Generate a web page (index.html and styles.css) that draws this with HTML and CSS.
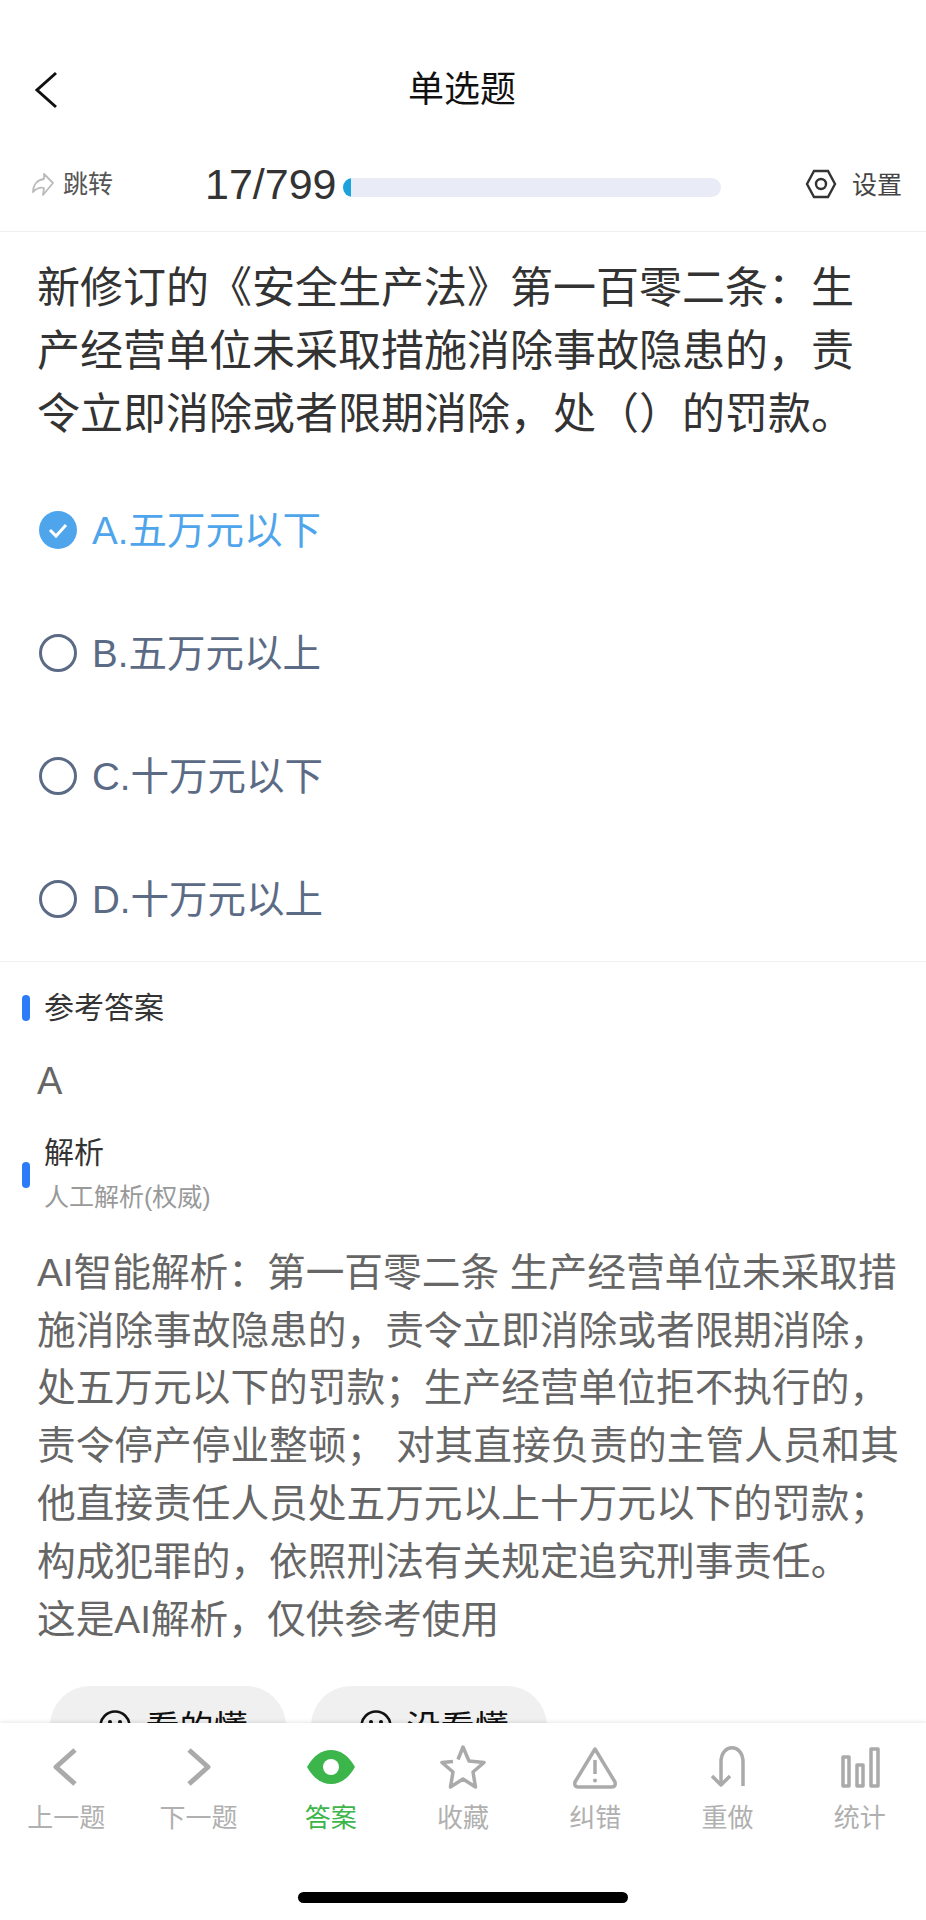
FILE: index.html
```html
<!DOCTYPE html>
<html lang="zh-CN">
<head>
<meta charset="UTF-8">
<meta name="viewport" content="width=device-width, initial-scale=1.0">
<title>单选题</title>
<link rel="stylesheet" href="styles.css">
</head>
<body>
<div class="page">
  <div class="content">
    <div class="nav">
      <svg class="nav-back" width="24" height="38" viewBox="0 0 24 38"><polyline points="22,2 3,19 22,36"/></svg>
      <div class="nav-title">单选题</div>
    </div>

    <div class="toolbar">
      <div class="jump">
        <svg width="24" height="26" viewBox="0 0 24 26"><path d="M13 2 L22 11 L12 23 L13 16 C9 15 5 17 2 20 C2 13 6 8 13 7 Z"/></svg>
        <span>跳转</span>
      </div>
      <div class="count">17/799</div>
      <div class="progress"><div class="progress-fill" style="width: 2.2%"></div></div>
      <div class="settings">
        <svg width="32" height="30" viewBox="0 0 32 30"><polygon points="2,15 9,2 23,2 30,15 23,28 9,28"/><circle cx="16" cy="15" r="5"/></svg>
        <span>设置</span>
      </div>
    </div>

    <div class="question">新修订的《安全生产法》第一百零二条&#xFF1A;生产经营单位未采取措施消除事故隐患的&#xFF0C;责令立即消除或者限期消除&#xFF0C;处&#xFF08;&#xFF09;的罚款。</div>

    <div class="options">
      <div class="option selected">
        <svg width="38" height="38" viewBox="0 0 38 38"><circle class="dot" cx="19" cy="19" r="19"/><polyline class="tick" points="11,19 17,25 27,14"/></svg>
        <span>A.五万元以下</span>
      </div>
      <div class="option">
        <svg width="38" height="38" viewBox="0 0 38 38"><circle cx="19" cy="19" r="17.5"/></svg>
        <span>B.五万元以上</span>
      </div>
      <div class="option">
        <svg width="38" height="38" viewBox="0 0 38 38"><circle cx="19" cy="19" r="17.5"/></svg>
        <span>C.十万元以下</span>
      </div>
      <div class="option">
        <svg width="38" height="38" viewBox="0 0 38 38"><circle cx="19" cy="19" r="17.5"/></svg>
        <span>D.十万元以上</span>
      </div>
    </div>

    <div class="section-head answer-head">
      <div class="section-bar"></div>
      <div class="section-title">参考答案</div>
    </div>
    <div class="answer">A</div>

    <div class="section-head analysis-head">
      <div class="section-bar"></div>
      <div>
        <div class="section-title">解析</div>
        <div class="section-sub">人工解析(权威)</div>
      </div>
    </div>
    <div class="analysis">AI智能解析&#xFF1A;第一百零二条 生产经营单位未采取措施消除事故隐患的&#xFF0C;责令立即消除或者限期消除&#xFF0C;处五万元以下的罚款&#xFF1B;生产经营单位拒不执行的&#xFF0C;责令停产停业整顿&#xFF1B; 对其直接负责的主管人员和其他直接责任人员处五万元以上十万元以下的罚款&#xFF1B;构成犯罪的&#xFF0C;依照刑法有关规定追究刑事责任。<br>这是AI解析&#xFF0C;仅供参考使用</div>

    <div class="feedback">
      <div class="feedback-btn">
        <svg width="32" height="32" viewBox="0 0 32 32"><circle cx="16" cy="16" r="14.5"/><circle class="eye" cx="11" cy="12" r="2"/><circle class="eye" cx="21" cy="12" r="2"/></svg>
        <span>看的懂</span>
      </div>
      <div class="feedback-btn">
        <svg width="32" height="32" viewBox="0 0 32 32"><circle cx="16" cy="16" r="14.5"/><circle class="eye" cx="11" cy="12" r="2"/><circle class="eye" cx="21" cy="12" r="2"/></svg>
        <span>没看懂</span>
      </div>
    </div>
  </div>

  <div class="tabbar">
    <div class="tabs">
      <div class="tab">
        <svg width="48" height="48" viewBox="0 0 48 48"><polyline points="33,7 14,24 33,41"/></svg>
        <span>上一题</span>
      </div>
      <div class="tab">
        <svg width="48" height="48" viewBox="0 0 48 48"><polyline points="15,7 34,24 15,41"/></svg>
        <span>下一题</span>
      </div>
      <div class="tab active">
        <svg width="48" height="48" viewBox="0 0 48 48"><path class="eye-shape" d="M0 24 C7 12 15 7 24 7 C33 7 41 12 48 24 C41 36 33 41 24 41 C15 41 7 36 0 24 Z"/><circle class="eye-pupil" cx="24" cy="24" r="8"/></svg>
        <span>答案</span>
      </div>
      <div class="tab">
        <svg width="48" height="48" viewBox="0 0 48 48"><path d="M19 16.5 L24 4 L30 18 L45 19.5 L34 29 L36.5 44 L24 36 L11.5 44 L14 29 L3 19.5 L14 18.5"/></svg>
        <span>收藏</span>
      </div>
      <div class="tab">
        <svg width="48" height="48" viewBox="0 0 48 48"><path d="M24 6 L44 39 Q45 44 41 44 H7 Q3 44 4 39 Z"/><line x1="24" y1="17" x2="24" y2="31"/><circle class="warn-dot" cx="24" cy="37.5" r="2"/></svg>
        <span>纠错</span>
      </div>
      <div class="tab">
        <svg width="48" height="48" viewBox="0 0 48 48"><path d="M39 43 V19 C39 0 17 0 17 19 V42"/><polyline points="8,33 17,42 26,33"/></svg>
        <span>重做</span>
      </div>
      <div class="tab">
        <svg width="48" height="48" viewBox="0 0 48 48"><rect x="7" y="14" width="6" height="29"/><rect x="21" y="22" width="6" height="21"/><rect x="35" y="6" width="7" height="37"/></svg>
        <span>统计</span>
      </div>
    </div>
    <div class="home-bar"></div>
  </div>
</div>
</body>
</html>
```

FILE: styles.css
```css
/* styles.css */
body {
  margin: 0;
  background-color: #fff;
  color: #333;
  font-family: "Liberation Sans", "Noto Sans CJK SC", sans-serif;
}

.page {
  height: 1920px;
  display: flex;
  flex-direction: column;
  overflow: hidden;
}

.content {
  flex: 1;
  min-height: 0;
  overflow: hidden;
}

/* top bar */
.nav {
  height: 74px;
  padding-top: 50px;
  display: flex;
  align-items: center;
  justify-content: center;
  position: relative;
}

.nav-back {
  position: absolute;
  left: 34px;
  top: 71px;
  fill: none;
  stroke: #111;
  stroke-width: 3;
}

.nav-title {
  font-size: 36px;
  color: #111;
  margin-bottom: 3px;
  margin-left: -2px;
}

.toolbar {
  height: 93px;
  padding-top: 14px;
  display: flex;
  align-items: center;
  border-bottom: 1px solid #f0f0f0;
}

.jump {
  width: 173px;
  padding-left: 31px;
  box-sizing: border-box;
  display: flex;
  align-items: center;
  gap: 8px;
  font-size: 25px;
  color: #555;
}

.jump span {
  margin-bottom: 5px;
}

.jump svg {
  fill: none;
  stroke: #bbb;
  stroke-width: 1.8;
  stroke-linejoin: round;
}

.count {
  font-size: 43px;
  color: #333;
  width: 138px;
  margin-left: 32px;
}

.progress {
  width: 378px;
  height: 19px;
  border-radius: 10px;
  background-color: #e9ecf6;
  overflow: hidden;
  margin-top: 6px;
}

.progress-fill {
  height: 100%;
  background-color: #1ba3dc;
}

.settings {
  margin-left: 84px;
  display: flex;
  align-items: center;
  gap: 15px;
  font-size: 25px;
  color: #444;
}

.settings span {
  margin-bottom: 4px;
}

.settings svg {
  fill: none;
  stroke: #333;
  stroke-width: 2.4;
  margin-bottom: 2px;
}

/* question */
.question {
  padding: 25px 40px 0 37px;
  font-size: 43px;
  line-height: 63px;
  color: #333;
}

.options {
  margin-top: 22px;
  border-bottom: 1px solid #f0f0f0;
  margin-bottom: -2px;
}

.option {
  height: 123.2px;
  padding-left: 39px;
  display: flex;
  align-items: center;
  gap: 15px;
  font-size: 38.5px;
  color: #5c6b85;
}

.option span {
  margin-bottom: 6px;
}

.option svg {
  fill: none;
  stroke: #5c6b85;
  stroke-width: 3;
}

.option.selected {
  color: #4fa5ec;
}

.option .dot {
  fill: #4fa5ec;
  stroke: none;
}

.option .tick {
  stroke: #fff;
  stroke-width: 3;
}

/* answer + analysis */
.section-head {
  display: flex;
  align-items: center;
  gap: 14px;
  padding-left: 22px;
}

.answer-head {
  margin-top: 28px;
}

.analysis-head {
  margin-top: 27px;
}

.section-bar {
  width: 8px;
  height: 26px;
  border-radius: 4px;
  background-color: #2b7cf6;
}

.section-title {
  font-size: 30px;
  line-height: 40px;
  color: #333;
}

.section-sub {
  font-size: 25px;
  line-height: 40px;
  margin-top: 4px;
  color: #999;
}

.answer {
  margin-top: 28px;
  padding-left: 37px;
  font-size: 38px;
  line-height: 50px;
  color: #666;
}

.analysis {
  margin-top: 27px;
  padding: 0 24px 0 37px;
  font-size: 38.7px;
  line-height: 57.8px;
  color: #666;
}

.feedback {
  margin-top: 38px;
  padding-left: 50px;
  display: flex;
  gap: 25px;
}

.feedback-btn {
  width: 236px;
  height: 84px;
  border-radius: 40px;
  background-color: #f0f0f0;
  box-sizing: border-box;
  padding-left: 10px;
  display: flex;
  align-items: center;
  justify-content: center;
  gap: 15px;
  font-size: 34px;
  color: #111;
}

.feedback-btn span {
  margin-bottom: 6px;
}

.feedback-btn svg {
  fill: none;
  stroke: #111;
  stroke-width: 2.5;
  margin-bottom: 4px;
}

.feedback-btn .eye {
  fill: #111;
  stroke: none;
}

/* bottom tabs */
.tabbar {
  height: 197px;
  flex-shrink: 0;
  background-color: #fff;
  box-shadow: 0 -1px 4px rgba(0, 0, 0, 0.1);
  position: relative;
}

.tabs {
  display: grid;
  grid-template-columns: repeat(7, 1fr);
  padding-top: 20px;
}

.tab {
  display: flex;
  flex-direction: column;
  align-items: center;
  font-size: 26px;
  line-height: 36px;
  color: #b0b0b0;
}

.tab span {
  margin-top: 9px;
}

.tab svg {
  fill: none;
  stroke: #aaa;
  stroke-width: 3.5;
  stroke-linejoin: round;
}

.tab:nth-child(-n+2) svg {
  stroke-width: 5;
}

.tab .warn-dot {
  fill: #aaa;
  stroke: none;
}

.tab.active {
  color: #3cb54a;
}

.tab .eye-shape {
  fill: #3cb54a;
  stroke: none;
}

.tab .eye-pupil {
  fill: #fff;
  stroke: none;
}

.home-bar {
  width: 330px;
  height: 11px;
  border-radius: 6px;
  background-color: #000;
  margin: 56px auto 0;
}
```
